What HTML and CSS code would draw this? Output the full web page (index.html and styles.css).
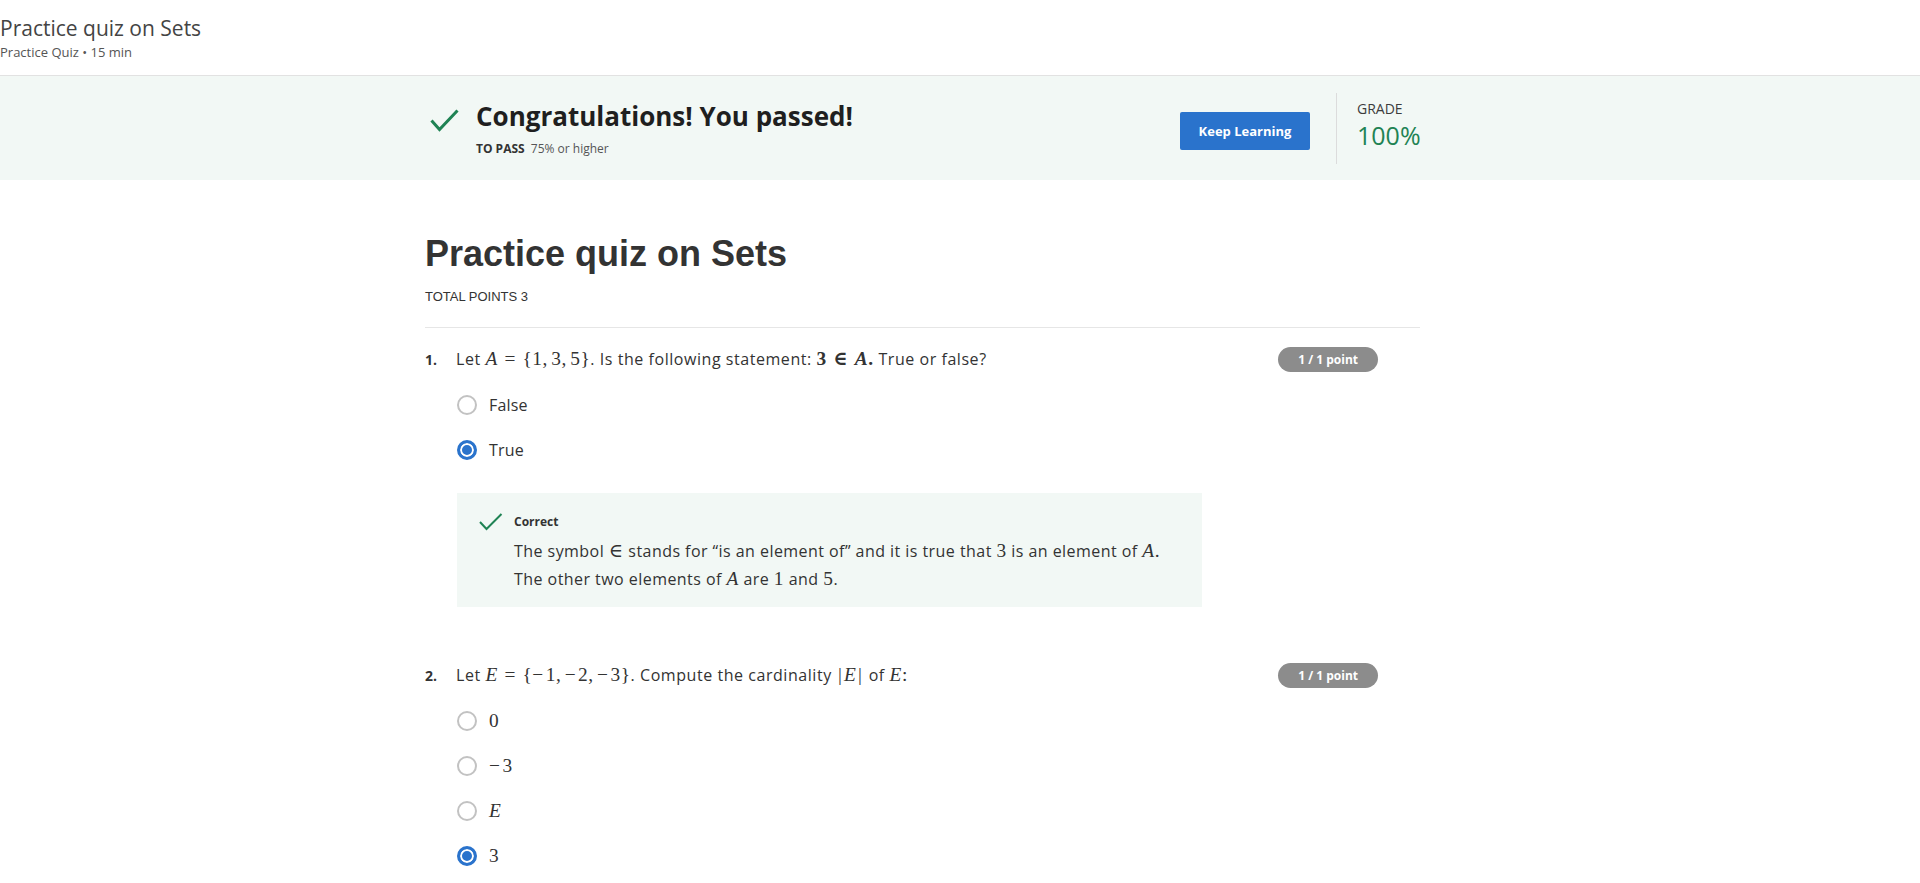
FILE: index.html
```html
<!DOCTYPE html>
<html lang="en">
<head>
<meta charset="utf-8">
<title>Practice quiz on Sets</title>
<link rel="stylesheet" href="styles.css">
</head>
<body>
<header class="topbar">
  <div class="topbar-title">Practice quiz on Sets</div>
  <div class="topbar-sub">Practice Quiz • 15 min</div>
</header>

<section class="banner">
  <div class="banner-inner">
    <div class="pass">
      <svg class="pass-check" width="29" height="23" viewBox="0 0 29 23"><path d="M1.5 11.5 L9.5 20.5 L27.5 1.5" fill="none" stroke="#1f8354" stroke-width="3"/></svg>
      <div class="pass-text">
        <h2 class="pass-title">Congratulations! You passed!</h2>
        <div class="pass-req"><span class="pass-label">TO PASS</span> 75% or higher</div>
      </div>
    </div>
    <button class="btn-primary">Keep Learning</button>
    <div class="vdivider"></div>
    <div class="grade">
      <div class="grade-label">GRADE</div>
      <div class="grade-value">100%</div>
    </div>
  </div>
</section>

<main class="quiz">
  <h1 class="quiz-title">Practice quiz on Sets</h1>
  <div class="quiz-total">TOTAL POINTS 3</div>
  <hr class="rule">

  <div class="question">
    <div class="qhead">
      <span class="qnum">1.</span>
      <div class="qtext">Let <span class="m"><i>A</i><span class="rel">=</span>{1,<span class="th"></span>3,<span class="th"></span>5}</span>. Is the following statement: <span class="m mb">3<span class="rel">∈</span><i>A</i>.</span> True or false?</div>
      <span class="badge">1 / 1 point</span>
    </div>
    <div class="options">
      <div class="option"><span class="radio"></span><span class="otext">False</span></div>
      <div class="option"><span class="radio checked"></span><span class="otext">True</span></div>
    </div>
    <div class="feedback">
      <svg class="fb-check" width="24" height="18" viewBox="0 0 24 18"><path d="M1 9 L7.5 16 L22.5 1" fill="none" stroke="#1f8354" stroke-width="2"/></svg>
      <div class="fb-body">
        <div class="fb-title">Correct</div>
        <div class="fb-text">The symbol <span class="m">∈</span> stands for “is an element of” and it is true that <span class="m">3</span> is an element of <span class="m"><i>A</i>.</span><br>The other two elements of <span class="m"><i>A</i></span> are <span class="m">1</span> and <span class="m">5</span>.</div>
      </div>
    </div>
  </div>

  <div class="question">
    <div class="qhead">
      <span class="qnum">2.</span>
      <div class="qtext">Let <span class="m"><i>E</i><span class="rel">=</span>{<span class="neg">−</span>1,<span class="th"></span><span class="neg">−</span>2,<span class="th"></span><span class="neg">−</span>3}</span>. Compute the cardinality <span class="m"><span class="bar">|</span><i>E</i><span class="bar">|</span></span> of <span class="m"><i>E</i>:</span></div>
      <span class="badge">1 / 1 point</span>
    </div>
    <div class="options">
      <div class="option"><span class="radio"></span><span class="m">0</span></div>
      <div class="option"><span class="radio"></span><span class="m"><span class="neg">−</span>3</span></div>
      <div class="option"><span class="radio"></span><span class="m"><i>E</i></span></div>
      <div class="option"><span class="radio checked"></span><span class="m">3</span></div>
    </div>
  </div>
</main>
</body>
</html>
```

FILE: styles.css
```css
* { box-sizing: border-box; }
html, body { margin: 0; padding: 0; background: #fff; }
body { font-family: "Open Sans", "Liberation Sans", sans-serif; color: #333; }

/* top bar */
.topbar {
  height: 76px;
  padding-top: 14px;
  border-bottom: 1px solid #e2e2e2;
  box-shadow: 0 1px 2px rgba(0, 0, 0, 0.05);
}
.topbar-title { font-size: 21px; line-height: 28px; color: #444; }
.topbar-sub { margin-top: 2px; font-size: 13px; line-height: 16px; color: #555; }

/* passed banner */
.banner { background: #f2f8f5; height: 104px; }
.banner-inner {
  width: 995px;
  margin-left: 425px;
  height: 100%;
  display: flex;
  align-items: center;
}
.pass { flex: 1; display: flex; align-items: flex-start; }
.pass-check { flex: none; margin: 9px 17px 0 5px; }
.pass-title { margin: 0; font-size: 26px; line-height: 32px; font-weight: 700; color: #1f1f1f; }
.pass-req { margin-top: 9px; font-size: 12px; line-height: 16px; color: #555; }
.pass-label { font-weight: 700; color: #333; margin-right: 3px; }

.btn-primary {
  flex: none;
  width: 130px;
  height: 38px;
  margin: 6px 26px 0 0;
  border: 0;
  border-radius: 2px;
  background: #2a73cc;
  color: #fff;
  font-family: "Open Sans", sans-serif;
  font-weight: 700;
  font-size: 13px;
  padding: 0;
}
.vdivider { flex: none; width: 1px; height: 71px; background: #dcdcdc; margin-right: 20px; }
.grade { flex: none; width: 63px; margin-bottom: 8px; }
.grade-label { font-size: 14px; line-height: 16px; color: #3d3d3d; }
.grade-value { margin-top: 5px; font-size: 25px; line-height: 26px; color: #1f8354; }

/* quiz body */
.quiz { width: 995px; margin-left: 425px; padding-top: 52px; padding-bottom: 60px; }
.quiz-title {
  margin: 0;
  font-family: "Liberation Sans", Arial, sans-serif;
  font-weight: 700;
  font-size: 36px;
  line-height: 44px;
  color: #333;
}
.quiz-total {
  margin-top: 13px;
  font-family: "Liberation Sans", Arial, sans-serif;
  font-size: 13px;
  line-height: 16px;
  color: #333;
}
.rule { margin: 22px 0 0; height: 0; border: 0; border-top: 1px solid #e6e6e6; }

.question { margin-top: 19px; }
.question + .question { margin-top: 56px; }
.qhead { display: flex; align-items: center; height: 24px; padding-right: 42px; }
.qnum { flex: none; width: 31px; font-size: 14px; font-weight: 700; color: #333; }
.qtext { font-size: 16px; line-height: 24px; color: #333; white-space: nowrap; letter-spacing: 0.55px; }
.badge {
  margin-left: auto;
  flex: none;
  height: 25px;
  padding: 0 20px;
  border-radius: 13px;
  background: #8c8c8c;
  color: #fff;
  font-size: 12px;
  font-weight: 700;
  line-height: 25px;
}

.options { margin-top: 11px; padding-left: 32px; }
.option { height: 45px; display: flex; align-items: center; gap: 12px; font-size: 16px; color: #333; }
.otext { letter-spacing: 0.2px; }
.radio {
  flex: none;
  width: 20px;
  height: 20px;
  border-radius: 50%;
  border: 2px solid #c2c2c2;
  background: #fff;
}
.radio.checked {
  border: 3px solid #2a73cc;
  background: #2a73cc;
  box-shadow: inset 0 0 0 2px #fff;
}

.feedback {
  margin: 21px 0 0 32px;
  width: 745px;
  background: #f2f8f5;
  padding: 20px 30px 14px 22px;
  display: flex;
  align-items: flex-start;
}
.fb-check { flex: none; margin-right: 11px; }
.fb-title { font-size: 12px; line-height: 18px; font-weight: 700; color: #333; }
.fb-text { margin-top: 6px; font-size: 16px; line-height: 27px; color: #333; white-space: nowrap; letter-spacing: 0.45px; }

/* math */
.m {
  font-family: "Liberation Serif", "DejaVu Serif", serif;
  font-size: 1.21em;
  font-style: normal;
  letter-spacing: 0.03em;
}
.m i { font-style: italic; }
.mb { font-weight: 700; }
.rel { margin: 0 0.34em; }
.neg { margin: 0 0.1em 0 0; }
.th { display: inline-block; width: 0.1667em; }
.bar { margin: 0 0.08em; }
```
